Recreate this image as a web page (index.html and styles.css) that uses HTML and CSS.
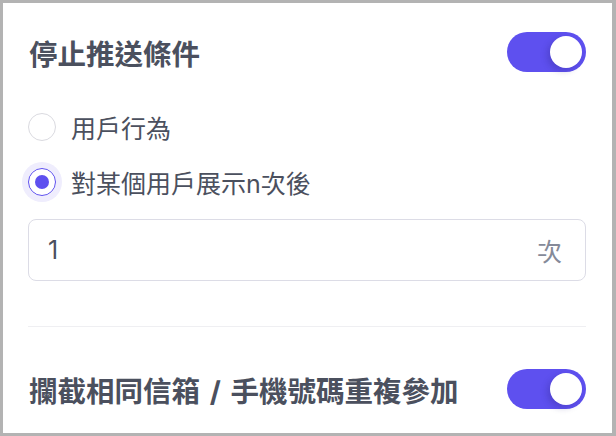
FILE: index.html
```html
<!DOCTYPE html>
<html lang="zh-Hant">
<head>
  <meta charset="UTF-8" />
  <meta name="viewport" content="width=device-width, initial-scale=1.0"/>
  <title>停止推送條件</title>
  <link rel="stylesheet" href="styles.css">
</head>
<body>
  <div class="card">
    <div class="row">
      <div class="heading">停止推送條件</div>
      <div class="toggle on"><span class="knob"></span></div>
    </div>

    <div class="radios">
      <label class="radio">
        <span class="dot"></span>
        <span class="label">用戶行為</span>
      </label>
      <label class="radio checked">
        <span class="dot"></span>
        <span class="label">對某個用戶展示n次後</span>
      </label>
    </div>

    <div class="field">
      <span class="value">1</span>
      <span class="unit">次</span>
    </div>

    <div class="divider"></div>

    <div class="row">
      <div class="heading wide">攔截相同信箱 / 手機號碼重複參加</div>
      <div class="toggle on"><span class="knob"></span></div>
    </div>
  </div>
</body>
</html>
```

FILE: styles.css
```css
body {
  margin: 0;
  background: #b3b3b3;
  font-family: Inter, "Noto Sans CJK TC", sans-serif;
  color: #4b505e;
}
.card {
  margin: 3px 4px 3px 3px;
  height: 430px;
  box-sizing: border-box;
  background: #fff;
  padding: 29px 26px 0 25px;
}
.row {
  display: flex;
  justify-content: space-between;
  align-items: center;
  height: 40px;
}
.heading {
  font-size: 28.5px;
  font-weight: 700;
  padding-left: 1px;
}
.heading.wide {
  word-spacing: 3px;
}

/* 開關 */
.toggle {
  width: 79px;
  height: 40px;
  border-radius: 20px;
  background: #dcdce3;
  box-sizing: border-box;
  padding: 4px;
  display: flex;
}
.toggle.on {
  background: #5e50ef;
  justify-content: flex-end;
}
.knob {
  width: 32px;
  height: 32px;
  border-radius: 50%;
  background: #fff;
  box-shadow: -3px 3px 6px rgba(40, 30, 120, 0.25);
}

/* 單選 */
.radios {
  margin-top: 35px;
  display: flex;
  flex-direction: column;
  gap: 15px;
}
.radio {
  display: flex;
  align-items: center;
  height: 40px;
  gap: 15px;
  font-size: 25px;
}
.dot {
  width: 28px;
  height: 28px;
  box-sizing: border-box;
  border: 1.5px solid #dadae0;
  border-radius: 50%;
  display: flex;
  align-items: center;
  justify-content: center;
}
.radio.checked .dot {
  border-color: #5e50ef;
  box-shadow: 0 0 0 6px #efedfd;
}
.radio.checked .dot::after {
  content: '';
  width: 14px;
  height: 14px;
  border-radius: 50%;
  background: #5e50ef;
}

/* 輸入框 */
.field {
  margin-top: 17px;
  height: 62px;
  box-sizing: border-box;
  border: 1px solid #dcdce6;
  border-radius: 8px;
  display: flex;
  align-items: center;
  justify-content: space-between;
  padding: 0 23px 0 19px;
  font-size: 25px;
}
.unit {
  color: #858a99;
}
.divider {
  margin-top: 45px;
  height: 1px;
  background: #efeff2;
  margin-bottom: 42px;
}
```
